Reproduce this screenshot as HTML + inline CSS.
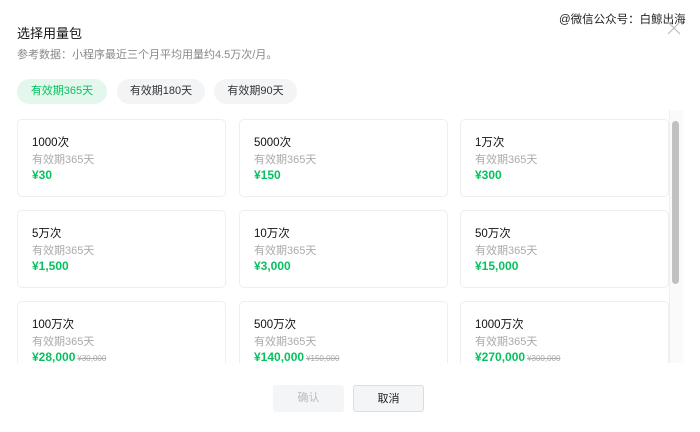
<!DOCTYPE html>
<html><head><meta charset="utf-8"><style>
*{margin:0;padding:0;box-sizing:border-box}
body{width:700px;height:432px;background:#fff;font-family:"Liberation Sans","Noto Sans CJK SC",sans-serif;position:relative;overflow:hidden;color:#222}
.a{position:absolute}
.t{left:17px;top:23px;font-size:13px;color:#111}
.s{left:17px;top:46px;font-size:11px;color:#888}
.tab{top:79px;height:25px;border-radius:13px;background:#f3f4f6;font-size:11px;color:#333;text-align:center;line-height:25px}
.tab.on{background:#e3f7ec;color:#07c160}
.card{width:209px;height:78px;border:1px solid #eee;border-radius:5px;background:#fff}
.card b{position:absolute;left:14px;top:14px;font-size:11.5px;font-weight:normal;color:#111}
.card i{position:absolute;left:14px;top:31px;font-size:11px;font-style:normal;color:#aaa}
.card u{position:absolute;left:14px;top:48px;font-size:12px;text-decoration:none;color:#07c160;font-weight:bold}
.card u s{font-size:8px;color:#aaa;font-weight:normal;margin-left:2px}
.clip{left:0;top:110px;width:700px;height:253px;overflow:hidden}
.btn{top:385px;width:71px;height:27px;border-radius:3px;font-size:11px;text-align:center;line-height:27px}
</style></head><body>
<div class="a t">选择用量包</div>
<div class="a s">参考数据：小程序最近三个月平均用量约4.5万次/月。</div>
<div class="a" style="left:559px;top:11px;font-size:11.5px;color:#222">@微信公众号：白鲸出海</div>
<svg class="a" style="left:666px;top:20px" width="16" height="16"><path d="M2 2L14 14M14 2L2 14" stroke="#bbb" stroke-width="1.2"/></svg>
<div class="a tab on" style="left:17px;width:90px">有效期365天</div>
<div class="a tab" style="left:117px;width:88px">有效期180天</div>
<div class="a tab" style="left:214px;width:83px">有效期90天</div>
<div class="a clip">
<div class="a card" style="left:17px;top:9px"><b>1000次</b><i>有效期365天</i><u>¥30</u></div>
<div class="a card" style="left:239px;top:9px"><b>5000次</b><i>有效期365天</i><u>¥150</u></div>
<div class="a card" style="left:460px;top:9px"><b>1万次</b><i>有效期365天</i><u>¥300</u></div>
<div class="a card" style="left:17px;top:100px"><b>5万次</b><i>有效期365天</i><u>¥1,500</u></div>
<div class="a card" style="left:239px;top:100px"><b>10万次</b><i>有效期365天</i><u>¥3,000</u></div>
<div class="a card" style="left:460px;top:100px"><b>50万次</b><i>有效期365天</i><u>¥15,000</u></div>
<div class="a card" style="left:17px;top:191px"><b>100万次</b><i>有效期365天</i><u>¥28,000<s>¥30,000</s></u></div>
<div class="a card" style="left:239px;top:191px"><b>500万次</b><i>有效期365天</i><u>¥140,000<s>¥150,000</s></u></div>
<div class="a card" style="left:460px;top:191px"><b>1000万次</b><i>有效期365天</i><u>¥270,000<s>¥300,000</s></u></div>
<div class="a" style="left:669px;top:0;width:14px;height:253px;background:#fafafa;border-left:1px solid #f0f0f0"></div>
<div class="a" style="left:672px;top:11px;width:7px;height:163px;background:#c1c1c1;border-radius:4px"></div>
</div>
<div class="a btn" style="left:273px;background:#f4f5f6;color:#bbb">确认</div>
<div class="a btn" style="left:353px;background:#f4f5f6;border:1px solid #ddd;color:#222">取消</div>
</body></html>
